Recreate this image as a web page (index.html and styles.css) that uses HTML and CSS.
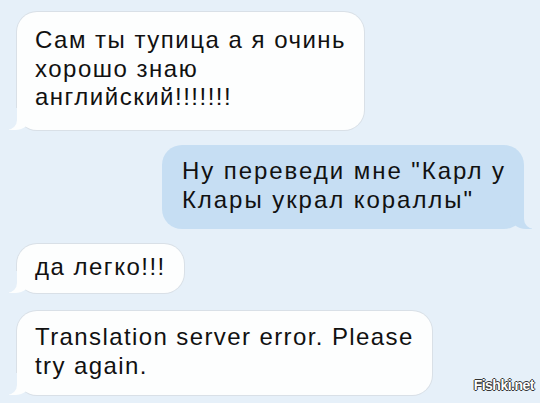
FILE: index.html
```html
<!DOCTYPE html>
<html lang="ru">
<head>
    <meta charset="UTF-8">
    <meta name="viewport" content="width=device-width, initial-scale=1.0">
    <title>Чат</title>
    <link rel="stylesheet" href="styles.css">
</head>
<body>
    <div class="chat">
        <div class="bubble left first">Сам ты тупица а я очинь<br>хорошо знаю<br>английский!!!!!!!</div>
        <div class="bubble right second">Ну переведи мне "Карл у<br>Клары украл кораллы"</div>
        <div class="bubble left third">да легко!!!</div>
        <div class="bubble left fourth">Translation server error. Please<br>try again.</div>
    </div>
    <div class="watermark">Fishki.net</div>
</body>
</html>
```
FILE: styles.css
```css
body {
    margin: 0;
    width: 540px;
    height: 403px;
    overflow: hidden;
    background-color: #e6f0f9;
    font-family: "Liberation Sans", Arial, sans-serif;
    position: relative;
}
.chat {
    display: flex;
    flex-direction: column;
    padding: 12px 16px 0 17px;
}
.bubble {
    position: relative;
    width: fit-content;
    font-size: 24px;
    letter-spacing: 1.5px;
    line-height: 28.5px;
    color: #111;
    border-radius: 20px;
    padding: 14px 18px 18px;
}
.left {
    background-color: #fdfefe;
    box-shadow: 0 0 0 1px #d9e0e7;
}
.left::before {
    content: "";
    position: absolute;
    left: -8px;
    bottom: 0;
    width: 22px;
    height: 20px;
    background-color: #fdfefe;
    border-bottom-right-radius: 16px 14px;
}
.left::after {
    content: "";
    position: absolute;
    left: -12px;
    bottom: 0;
    width: 12px;
    height: 22px;
    background-color: #e6f0f9;
    border-bottom-right-radius: 10px;
}
.right {
    align-self: flex-end;
    background-color: #c6def3;
}
.right::before {
    content: "";
    position: absolute;
    right: -8px;
    bottom: 0;
    width: 22px;
    height: 20px;
    background-color: #c6def3;
    border-bottom-left-radius: 16px 14px;
}
.right::after {
    content: "";
    position: absolute;
    right: -12px;
    bottom: 0;
    width: 12px;
    height: 22px;
    background-color: #e6f0f9;
    border-bottom-left-radius: 10px;
}
.second {
    margin-top: 15.5px;
    letter-spacing: 1.95px;
    padding: 12px 18px 15px 20px;
}
.third {
    margin-top: 15px;
    padding: 9px 18px 11.5px;
}
.fourth {
    margin-top: 18px;
    letter-spacing: 1.4px;
    padding: 12px 18px 15px;
}
.watermark {
    position: absolute;
    right: 6px;
    bottom: 10px;
    font-size: 14px;
    font-weight: bold;
    color: #fff;
    letter-spacing: -0.5px;
    text-shadow: 1px 0 0 #333, -1px 0 0 #333, 0 1px 0 #333, 0 -1px 0 #333;
}
```
